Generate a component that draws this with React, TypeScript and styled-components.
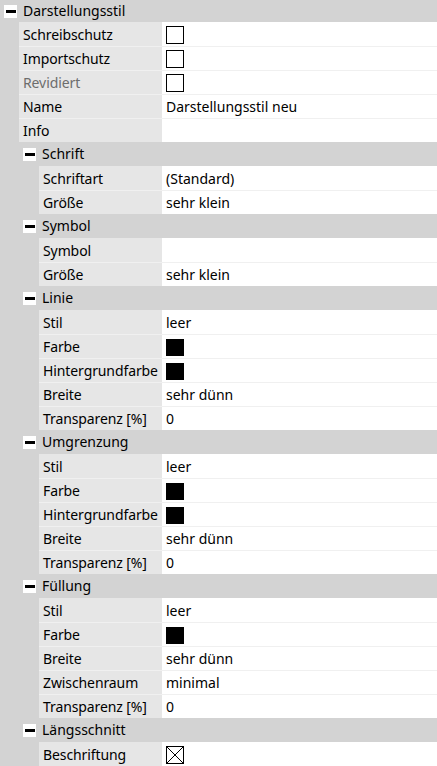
import React from "react";
import styled, { createGlobalStyle } from "styled-components";

const Global = createGlobalStyle`
  html, body { margin: 0; padding: 0; background: #ffffff; }
  *, *::before, *::after { box-sizing: border-box; }
  body { font-family: "Noto Sans", "Open Sans", sans-serif; }
`;

const Tree = styled.div`
  width: 437px;
  height: 766px;
  overflow: hidden;
  display: flex;
  flex-direction: column;
  background: #d3d3d3;
  font-size: 14px;
  color: #000;
`;

const HeaderRow = styled.div<{ $h: number }>`
  height: ${(p) => p.$h}px;
  display: flex;
  align-items: center;
  background: #d3d3d3;
  padding-left: 4px;
  gap: 6px;
`;

const Toggle = styled.span`
  width: 13px;
  height: 13px;
  background: #ffffff;
  display: flex;
  align-items: center;
  justify-content: center;
  margin-top: 1px;
  &::after {
    content: "";
    width: 10px;
    height: 3px;
    background: #000;
  }
`;

const HeaderText = styled.span`
  line-height: 1;
`;

const Body = styled.div<{ $gutter: number }>`
  display: flex;
  flex-direction: column;
  padding-left: ${(p) => p.$gutter}px;
  background: #d3d3d3;
`;

const RowGroup = styled.div`
  display: flex;
  flex-direction: column;
`;

const Row = styled.div`
  height: 24px;
  display: flex;
  & + & {
    border-top: 1px solid #f0f0f0;
  }
`;

const Label = styled.div<{ $muted?: boolean }>`
  flex: 1;
  min-width: 0;
  background: #e6e6e6;
  display: flex;
  align-items: center;
  padding-left: 4px;
  color: ${(p) => (p.$muted ? "#6d6d6d" : "#000")};
  white-space: nowrap;
  overflow: hidden;
  letter-spacing: -0.1px;
`;

const Value = styled.div`
  width: 275px;
  flex: none;
  background: #ffffff;
  display: flex;
  align-items: center;
  padding-left: 4px;
  white-space: nowrap;
`;

const Check = styled.span`
  width: 18px;
  height: 18px;
  border: 1px solid #000;
  background: #fff;
  display: block;
  margin-top: 1px;
`;

const Swatch = styled.span`
  width: 18px;
  height: 17px;
  background: #000;
  display: block;
  margin-top: 1px;
`;

const CrossBox = () => (
  <svg width="18" height="18" viewBox="0 0 18 18" style={{ display: "block", marginTop: 1 }}>
    <rect x="0.5" y="0.5" width="17" height="17" fill="#fff" stroke="#000" strokeWidth="1" />
    <path d="M1 1 L17 17 M17 1 L1 17" stroke="#000" strokeWidth="1" />
  </svg>
);

type Item =
  | { kind: "row"; label: string; value?: React.ReactNode; muted?: boolean }
  | { kind: "section"; title: string; items: Item[] };

const row = (label: string, value?: React.ReactNode, muted?: boolean): Item => ({
  kind: "row",
  label,
  value,
  muted,
});
const section = (title: string, items: Item[]): Item => ({ kind: "section", title, items });

const data: Item = section("Darstellungsstil", [
  row("Schreibschutz", <Check />),
  row("Importschutz", <Check />),
  row("Revidiert", <Check />, true),
  row("Name", "Darstellungsstil neu"),
  row("Info"),
  section("Schrift", [row("Schriftart", "(Standard)"), row("Größe", "sehr klein")]),
  section("Symbol", [row("Symbol"), row("Größe", "sehr klein")]),
  section("Linie", [
    row("Stil", "leer"),
    row("Farbe", <Swatch />),
    row("Hintergrundfarbe", <Swatch />),
    row("Breite", "sehr dünn"),
    row("Transparenz [%]", "0"),
  ]),
  section("Umgrenzung", [
    row("Stil", "leer"),
    row("Farbe", <Swatch />),
    row("Hintergrundfarbe", <Swatch />),
    row("Breite", "sehr dünn"),
    row("Transparenz [%]", "0"),
  ]),
  section("Füllung", [
    row("Stil", "leer"),
    row("Farbe", <Swatch />),
    row("Breite", "sehr dünn"),
    row("Zwischenraum", "minimal"),
    row("Transparenz [%]", "0"),
  ]),
  section("Längsschnitt", [row("Beschriftung", <CrossBox />)]),
]);

const Render: React.FC<{ item: Item; level: number }> = ({ item, level }) => {
  if (item.kind === "row") return null;
  const groups: React.ReactNode[] = [];
  let buffer: Item[] = [];
  const flush = (key: string) => {
    if (!buffer.length) return;
    groups.push(
      <RowGroup key={key}>
        {buffer.map((r, i) =>
          r.kind === "row" ? (
            <Row key={i}>
              <Label $muted={r.muted}>{r.label}</Label>
              <Value>{r.value}</Value>
            </Row>
          ) : null
        )}
      </RowGroup>
    );
    buffer = [];
  };
  item.items.forEach((it, i) => {
    if (it.kind === "row") buffer.push(it);
    else {
      flush("g" + i);
      groups.push(<Render key={"s" + i} item={it} level={level + 1} />);
    }
  });
  flush("end");
  return (
    <>
      <HeaderRow $h={level === 0 ? 22 : 24}>
        <Toggle />
        <HeaderText>{item.title}</HeaderText>
      </HeaderRow>
      <Body $gutter={level === 0 ? 19 : 20}>{groups}</Body>
    </>
  );
};

export default function App() {
  return (
    <>
      <Global />
      <Tree>
        <Render item={data} level={0} />
      </Tree>
    </>
  );
}
